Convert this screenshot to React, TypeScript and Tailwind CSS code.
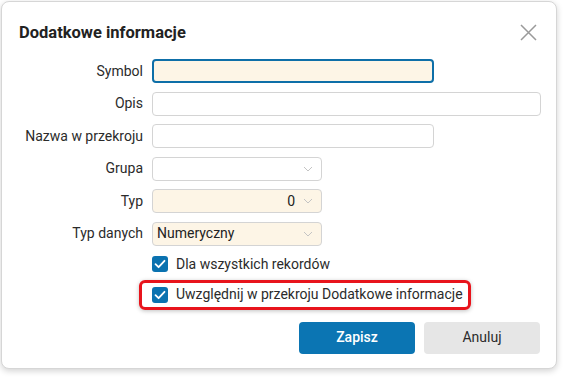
import React from 'react';

const font = { fontFamily: 'Roboto, "Noto Sans", sans-serif' };

function Chevron() {
  return (
    <svg width="10" height="6" viewBox="0 0 10 6" className="shrink-0">
      <path d="M1 1 L5 5 L9 1" fill="none" stroke="#c4c4c4" strokeWidth="1" />
    </svg>
  );
}

function Check() {
  return (
    <span className="flex h-[16px] w-[16px] shrink-0 items-center justify-center rounded-[3px] bg-[#0a72b0]">
      <svg width="12" height="10" viewBox="0 0 12 10">
        <path d="M1.5 5.2 L4.6 8.2 L10.5 1.8" fill="none" stroke="white" strokeWidth="1.8" strokeLinecap="round" strokeLinejoin="round" />
      </svg>
    </span>
  );
}

function Row({ label, children }: { label: string; children: React.ReactNode }) {
  return (
    <div className="flex h-[24px] items-center">
      <div className="w-[142px] pr-[1px] text-right text-[14px] text-[#2b2b2b]">{label}</div>
      <div className="ml-[8px] flex h-full">{children}</div>
    </div>
  );
}

function Select({ value, right, cream }: { value?: string; right?: boolean; cream?: boolean }) {
  return (
    <div
      className={`flex h-[24px] w-[170px] items-center rounded-[4px] border border-[#d4d4d4] pl-[4px] pr-[8px] text-[14px] text-[#222] ${
        cream ? 'bg-[#fdf5e6]' : 'bg-white'
      }`}
    >
      <span className={`flex-1 ${right ? 'pr-[8px] text-right' : ''}`}>{value}</span>
      <Chevron />
    </div>
  );
}

export default function App() {
  return (
    <div className="h-[379px] w-[567px] bg-white pl-[1px] pt-[1px]" style={font}>
      <div className="h-[368px] w-[556px] rounded-[8px] border border-[#d6d6d6] bg-white shadow-[0_2px_6px_rgba(0,0,0,0.18)]">
        {/* header */}
        <div className="flex h-[56px] items-start justify-between pl-[17px] pr-[19px] pt-[20px]">
          <h1 className="text-[16.5px] font-bold leading-[22px] text-[#222]">Dodatkowe informacje</h1>
          <svg width="17" height="17" viewBox="0 0 17 17" className="mt-[2px]">
            <path d="M1 1 L16 16 M16 1 L1 16" stroke="#9a9a9a" strokeWidth="1.5" />
          </svg>
        </div>

        {/* form */}
        <div className="mt-[1px] flex flex-col gap-[8.5px]">
          <Row label="Symbol">
            <div className="h-[24px] w-[282px] rounded-[4px] border-2 border-[#0e6fa8] bg-[#fdf5e6]" />
          </Row>
          <Row label="Opis">
            <div className="h-[24px] w-[389px] rounded-[4px] border border-[#d4d4d4] bg-white" />
          </Row>
          <Row label="Nazwa w przekroju">
            <div className="h-[24px] w-[282px] rounded-[4px] border border-[#d4d4d4] bg-white" />
          </Row>
          <Row label="Grupa">
            <Select />
          </Row>
          <Row label="Typ">
            <Select value="0" right cream />
          </Row>
          <Row label="Typ danych">
            <Select value="Numeryczny" cream />
          </Row>
        </div>

        {/* checkboxes */}
        <div className="mt-[10px] flex flex-col pl-[137px]">
          <div className="flex h-[17px] items-center gap-[8px] pl-[13px] text-[14px] text-[#2b2b2b]">
            <Check />
            <span>Dla wszystkich rekordów</span>
          </div>
          <div className="mt-[7px] flex h-[30px] w-[332px] items-center gap-[8px] rounded-[6px] border-[3px] border-[#e8141c] pl-[10px] text-[14px] text-[#2b2b2b] shadow-[0_1px_4px_rgba(0,0,0,0.25)]">
            <Check />
            <span>Uwzględnij w przekroju Dodatkowe informacje</span>
          </div>
        </div>

        {/* buttons */}
        <div className="mt-[12px] flex justify-end gap-[9px] pr-[16px]">
          <button className="h-[32px] w-[116px] rounded-[4px] bg-[#0b75b3] text-[14px] font-medium text-white">Zapisz</button>
          <button className="h-[32px] w-[116px] rounded-[4px] bg-[#e6e6e6] text-[14px] text-[#2b2b2b]">Anuluj</button>
        </div>
      </div>
    </div>
  );
}
